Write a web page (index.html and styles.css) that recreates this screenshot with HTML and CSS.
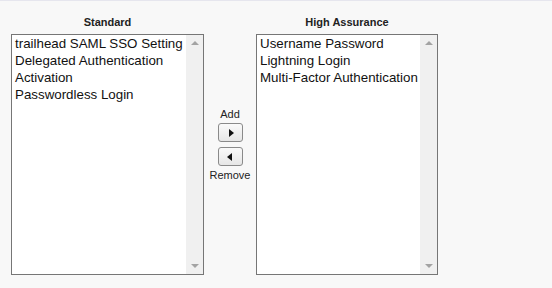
FILE: index.html
```html
<!DOCTYPE html>
<html lang="en">
<head>
    <meta charset="UTF-8">
    <title>Session Security Levels</title>
    <link rel="stylesheet" href="styles.css">
</head>
<body>
    <div class="duel">
        <!-- Standard list -->
        <div class="col col-left">
            <div class="col-label">Standard</div>
            <div class="listbox">
                <div class="options">
                    <div class="opt">trailhead SAML SSO Setting</div>
                    <div class="opt">Delegated Authentication</div>
                    <div class="opt">Activation</div>
                    <div class="opt">Passwordless Login</div>
                </div>
                <div class="scrollbar">
                    <span class="arrow up"></span>
                    <span class="arrow down"></span>
                </div>
            </div>
        </div>

        <!-- Add / Remove -->
        <div class="mover">
            <div class="mover-label">Add</div>
            <button class="mover-btn"><span class="tri right"></span></button>
            <button class="mover-btn"><span class="tri left"></span></button>
            <div class="mover-label">Remove</div>
        </div>

        <!-- High Assurance list -->
        <div class="col col-right">
            <div class="col-label">High Assurance</div>
            <div class="listbox">
                <div class="options">
                    <div class="opt">Username Password</div>
                    <div class="opt">Lightning Login</div>
                    <div class="opt">Multi-Factor Authentication</div>
                </div>
                <div class="scrollbar">
                    <span class="arrow up"></span>
                    <span class="arrow down"></span>
                </div>
            </div>
        </div>
    </div>
</body>
</html>
```

FILE: styles.css
```css
body {
    margin: 0;
    padding: 0;
    background: #f8f8f8;
    border-top: 1px solid #e6e6ee;
    font-family: 'Liberation Sans', Arial, sans-serif;
    color: #000;
    height: 287px;
}

.duel {
    display: flex;
    padding: 15px 0 0 11px;
}

.col-left {
    width: 193px;
}

.col-right {
    width: 182px;
}

.col-label {
    font-size: 11px;
    font-weight: bold;
    text-align: center;
    height: 18px;
    line-height: 13px;
    color: #222;
}

.listbox {
    display: flex;
    height: 241px;
    box-sizing: border-box;
    border: 1px solid #767676;
    background: #fff;
}

.options {
    flex: 1;
    padding: 0 0 0 3px;
    overflow: hidden;
}

.opt {
    font-size: 13.33px;
    line-height: 17px;
    white-space: nowrap;
    color: #111;
}

.scrollbar {
    width: 17px;
    background: #f0f0f0;
    display: flex;
    flex-direction: column;
    justify-content: space-between;
    align-items: center;
    padding: 6px 0;
}

.arrow {
    width: 0;
    height: 0;
    border-left: 4px solid transparent;
    border-right: 4px solid transparent;
}

.arrow.up {
    border-bottom: 4px solid #a3a3a3;
}

.arrow.down {
    border-top: 4px solid #a3a3a3;
}

/* Add / Remove */
.mover {
    width: 52px;
    display: flex;
    flex-direction: column;
    align-items: center;
    padding-top: 92px;
}

.mover-label {
    font-size: 11px;
    line-height: 13px;
    color: #222;
}

.mover-btn {
    width: 25px;
    height: 19px;
    margin: 2px 0 3px;
    padding: 0;
    border: 1px solid #8a8a8a;
    border-radius: 3px;
    background: linear-gradient(#fafafa, #e6e6e6);
    display: flex;
    align-items: center;
    justify-content: center;
}

.tri {
    width: 0;
    height: 0;
    border-top: 4px solid transparent;
    border-bottom: 4px solid transparent;
}

.tri.right {
    border-left: 5px solid #111;
    margin-left: 2px;
}

.tri.left {
    border-right: 5px solid #111;
    margin-right: 1px;
}
```
